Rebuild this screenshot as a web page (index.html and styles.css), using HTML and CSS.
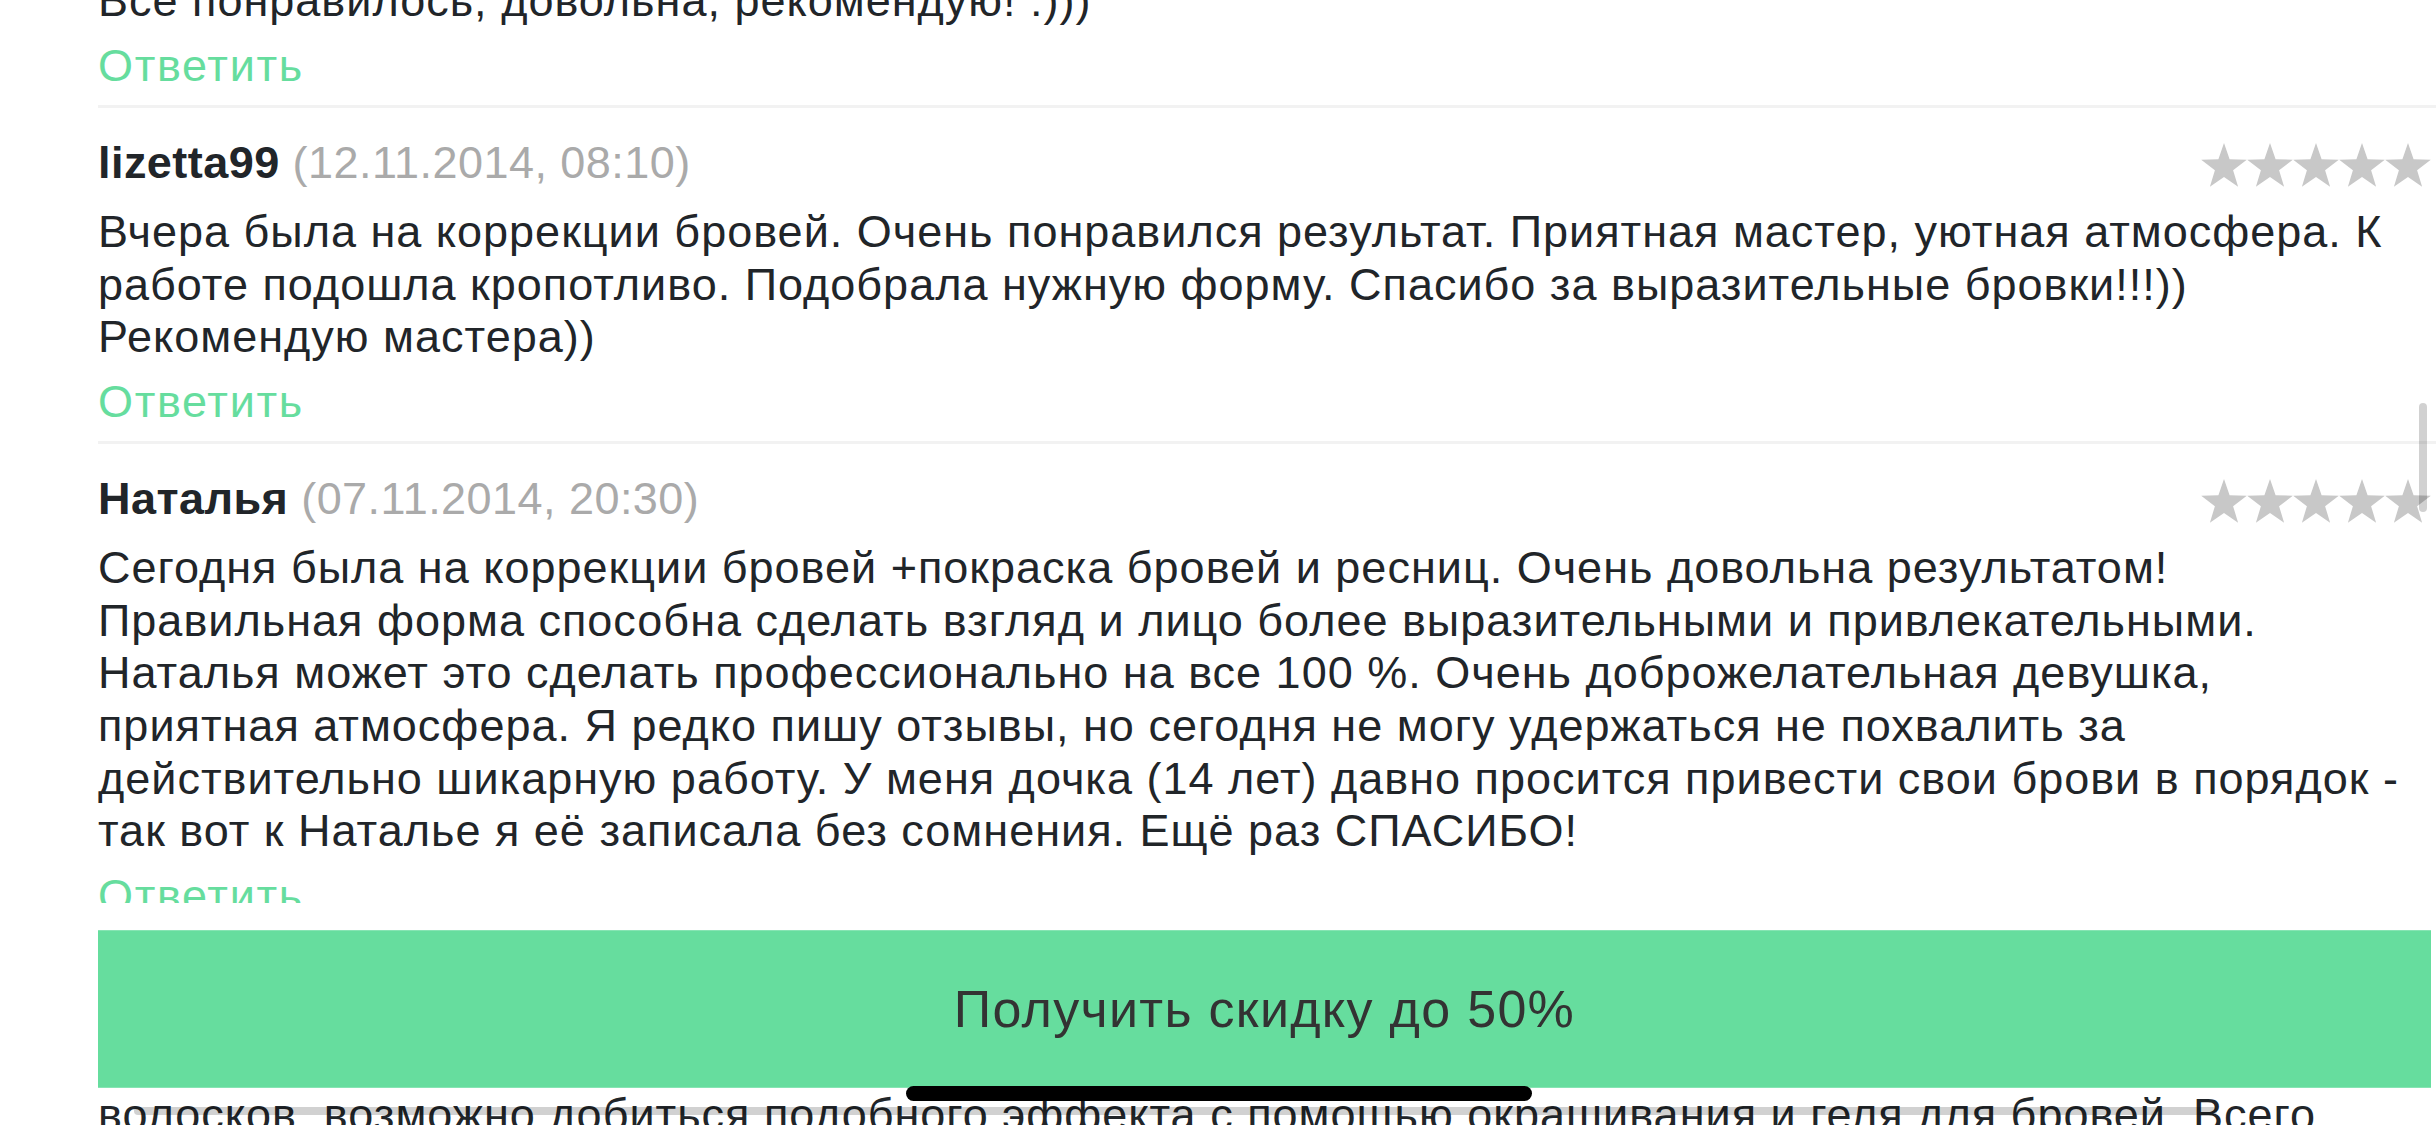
FILE: index.html
```html
<!DOCTYPE html>
<html lang="ru">
<head>
<meta charset="utf-8">
<title>Отзывы</title>
<link rel="stylesheet" href="styles.css">
</head>
<body>
<main class="reviews">
  <article class="review review--cut">
    <p class="review-text">Все понравилось, довольна, рекомендую! :)))</p>
    <a class="reply" href="#">Ответить</a>
  </article>

  <article class="review">
    <header class="review-head">
      <div class="review-author"><span class="name">lizetta99</span> <span class="date">(12.11.2014, 08:10)</span></div>
      <div class="stars">
        <svg class="star" viewBox="0 0 46 44"><polygon points="23,0 28.6,16.3 45.8,16.7 32.1,27.2 37.1,43.7 23,33.9 8.9,43.7 13.9,27.2 0.2,16.7 17.4,16.3"/></svg>
        <svg class="star" viewBox="0 0 46 44"><polygon points="23,0 28.6,16.3 45.8,16.7 32.1,27.2 37.1,43.7 23,33.9 8.9,43.7 13.9,27.2 0.2,16.7 17.4,16.3"/></svg>
        <svg class="star" viewBox="0 0 46 44"><polygon points="23,0 28.6,16.3 45.8,16.7 32.1,27.2 37.1,43.7 23,33.9 8.9,43.7 13.9,27.2 0.2,16.7 17.4,16.3"/></svg>
        <svg class="star" viewBox="0 0 46 44"><polygon points="23,0 28.6,16.3 45.8,16.7 32.1,27.2 37.1,43.7 23,33.9 8.9,43.7 13.9,27.2 0.2,16.7 17.4,16.3"/></svg>
        <svg class="star" viewBox="0 0 46 44"><polygon points="23,0 28.6,16.3 45.8,16.7 32.1,27.2 37.1,43.7 23,33.9 8.9,43.7 13.9,27.2 0.2,16.7 17.4,16.3"/></svg>
      </div>
    </header>
    <p class="review-text">Вчера была на коррекции бровей. Очень понравился результат. Приятная мастер, уютная атмосфера. К<br>работе подошла кропотливо. Подобрала нужную форму. Спасибо за выразительные бровки!!!))<br>Рекомендую мастера))</p>
    <a class="reply" href="#">Ответить</a>
  </article>

  <article class="review">
    <header class="review-head">
      <div class="review-author"><span class="name">Наталья</span> <span class="date">(07.11.2014, 20:30)</span></div>
      <div class="stars">
        <svg class="star" viewBox="0 0 46 44"><polygon points="23,0 28.6,16.3 45.8,16.7 32.1,27.2 37.1,43.7 23,33.9 8.9,43.7 13.9,27.2 0.2,16.7 17.4,16.3"/></svg>
        <svg class="star" viewBox="0 0 46 44"><polygon points="23,0 28.6,16.3 45.8,16.7 32.1,27.2 37.1,43.7 23,33.9 8.9,43.7 13.9,27.2 0.2,16.7 17.4,16.3"/></svg>
        <svg class="star" viewBox="0 0 46 44"><polygon points="23,0 28.6,16.3 45.8,16.7 32.1,27.2 37.1,43.7 23,33.9 8.9,43.7 13.9,27.2 0.2,16.7 17.4,16.3"/></svg>
        <svg class="star" viewBox="0 0 46 44"><polygon points="23,0 28.6,16.3 45.8,16.7 32.1,27.2 37.1,43.7 23,33.9 8.9,43.7 13.9,27.2 0.2,16.7 17.4,16.3"/></svg>
        <svg class="star" viewBox="0 0 46 44"><polygon points="23,0 28.6,16.3 45.8,16.7 32.1,27.2 37.1,43.7 23,33.9 8.9,43.7 13.9,27.2 0.2,16.7 17.4,16.3"/></svg>
      </div>
    </header>
    <p class="review-text">Сегодня была на коррекции бровей +покраска бровей и ресниц. Очень довольна результатом!<br>Правильная форма способна сделать взгляд и лицо более выразительными и привлекательными.<br>Наталья может это сделать профессионально на все 100 %. Очень доброжелательная девушка,<br>приятная атмосфера. Я редко пишу отзывы, но сегодня не могу удержаться не похвалить за<br>действительно шикарную работу. У меня дочка (14 лет) давно просится привести свои брови в порядок -<br>так вот к Наталье я её записала без сомнения. Ещё раз СПАСИБО!</p>
    <a class="reply" href="#">Ответить</a>
  </article>

  <article class="review">
    <header class="review-head">
      <div class="review-author"><span class="name">Ольга</span> <span class="date">(02.11.2014, 14:15)</span></div>
    </header>
    <p class="review-text">Мастер объяснила, что даже при небольшом количестве светлых и тонких<br>волосков, возможно добиться подобного эффекта с помощью окрашивания и геля для бровей. Всего<br>за полчаса брови стали аккуратными и выразительными.</p>
    <a class="reply" href="#">Ответить</a>
  </article>
</main>

<footer class="cta-bar">
  <a class="cta-button" href="#">Получить скидку до 50%</a>
</footer>

<div class="scroll-indicator scroll-indicator--v"></div>
<div class="scroll-indicator scroll-indicator--h"></div>
<div class="home-indicator"></div>
</body>
</html>
```

FILE: styles.css
```css
html, body {
  margin: 0;
  padding: 0;
  overflow: hidden;
  background: #ffffff;
  height: 1125px;
}

body {
  font-family: "Liberation Sans", Arial, Helvetica, sans-serif;
  font-size: 45px;
  line-height: 52.65px;
  letter-spacing: 0.45px;
  color: #212529;
}

.reviews {
  margin-top: -24.9px;
  padding-left: 98px;
}

.review {
  border-top: 3px solid #f2f2f2;
  padding: 29.1px 5px 12px 0;
}

.review--cut {
  border-top: 0;
  padding-top: 0;
}

.review-head {
  display: flex;
  justify-content: space-between;
  align-items: flex-start;
  margin-bottom: 16.35px;
}

.name {
  font-weight: bold;
  color: #212529;
}

.date {
  color: #aaaaaa;
}

.stars {
  display: flex;
  margin-top: 6px;
}

.star {
  display: block;
  width: 46px;
  height: 44px;
  fill: #c8c8c8;
}

.review-text {
  margin: 0;
  letter-spacing: 1px;
}

.reply {
  display: block;
  margin-top: 12.35px;
  color: #66dd9e;
  letter-spacing: 1.7px;
  text-decoration: none;
}

.cta-bar {
  position: fixed;
  left: 0;
  right: 0;
  bottom: 37px;
  padding: 27px 5px 0 98px;
  background: #ffffff;
}

.cta-button {
  display: flex;
  align-items: center;
  justify-content: center;
  height: 156px;
  border-top: 1px solid #86e4b3;
  border-bottom: 1px solid #86e4b3;
  background: #66dd9e;
  color: #333333;
  font-size: 52px;
  letter-spacing: 1.3px;
  text-decoration: none;
}

.scroll-indicator {
  position: fixed;
  background: rgba(0, 0, 0, 0.18);
  border-radius: 5px;
}

.scroll-indicator--v {
  left: 2419px;
  top: 403px;
  width: 8px;
  height: 109px;
}

.scroll-indicator--h {
  left: 134px;
  top: 1107px;
  width: 2083px;
  height: 8px;
}

.home-indicator {
  position: fixed;
  left: 906px;
  top: 1086px;
  width: 626px;
  height: 15px;
  border-radius: 8px;
  background: #000000;
}
```
